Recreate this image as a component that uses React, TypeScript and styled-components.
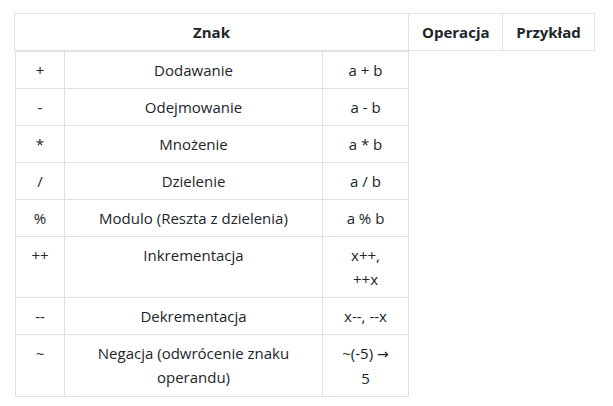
import React from "react";
import styled, { createGlobalStyle } from "styled-components";

const GlobalStyle = createGlobalStyle`
  html, body {
    margin: 0;
    padding: 0;
    background: #fff;
  }
  body {
    font-family: "Open Sans", "Noto Sans", "Liberation Sans", sans-serif;
    font-size: 15px;
    color: #212529;
  }
`;

const Arrow = styled.span`
  font-family: "DejaVu Sans", "Liberation Sans", sans-serif;
  font-size: 14px;
`;

const rows: { sign: string; name: string; example: React.ReactNode }[] = [
  { sign: "+", name: "Dodawanie", example: "a + b" },
  { sign: "-", name: "Odejmowanie", example: "a - b" },
  { sign: "*", name: "Mnożenie", example: "a * b" },
  { sign: "/", name: "Dzielenie", example: "a / b" },
  { sign: "%", name: "Modulo (Reszta z dzielenia)", example: "a % b" },
  { sign: "++", name: "Inkrementacja", example: "x++,\n++x" },
  { sign: "--", name: "Dekrementacja", example: "x--, --x" },
  {
    sign: "~",
    name: "Negacja (odwrócenie znaku operandu)",
    example: (
      <>
        ~(-5) <Arrow>→</Arrow>
        {"\n"}5
      </>
    ),
  },
];

export default function App() {
  return (
    <>
      <GlobalStyle />
      <Page>
        <HeadTable>
          <colgroup>
            <Col $w={395} />
            <Col $w={94} />
            <Col $w={92} />
          </colgroup>
          <thead>
            <tr>
              <HeadCell $first>Znak</HeadCell>
              <HeadCell>Operacja</HeadCell>
              <HeadCell>Przykład</HeadCell>
            </tr>
          </thead>
        </HeadTable>
        <BodyTable>
          <colgroup>
            <Col $w={50} />
            <Col $w={258} />
            <Col $w={86} />
          </colgroup>
          <tbody>
            {rows.map((r, i) => (
              <Row key={r.sign} $top={i === 0}>
                <Cell $first>{r.sign}</Cell>
                <Cell>{r.name}</Cell>
                <Cell>{r.example}</Cell>
              </Row>
            ))}
          </tbody>
        </BodyTable>
      </Page>
    </>
  );
}

const Page = styled.div`
  display: flex;
  flex-direction: column;
  align-items: flex-start;
  padding: 13px 0 0 14px;
`;

const Col = styled.col<{ $w: number }>`
  width: ${({ $w }) => $w}px;
`;

const HeadTable = styled.table`
  border-collapse: separate;
  border-spacing: 0;
  table-layout: fixed;
  width: 581px;
`;

const HeadCell = styled.th<{ $first?: boolean }>`
  box-sizing: border-box;
  height: 38px;
  padding: 6px 13px;
  line-height: 24px;
  font-weight: 700;
  text-align: center;
  border-top: 1px solid #dee2e6;
  border-bottom: 1px solid #dee2e6;
  border-right: 1px solid #dee2e6;
  border-left: ${({ $first }) => ($first ? "1px solid #dee2e6" : "none")};
`;

const BodyTable = styled.table`
  margin-left: 1px;
  border-collapse: separate;
  border-spacing: 0;
  table-layout: fixed;
  width: 394px;
`;

const Row = styled.tr<{ $top?: boolean }>`
  td {
    border-top: ${({ $top }) => ($top ? "1px solid #dee2e6" : "none")};
  }
`;

const Cell = styled.td<{ $first?: boolean }>`
  box-sizing: border-box;
  padding: 6px 13px;
  line-height: 24px;
  text-align: center;
  vertical-align: top;
  white-space: pre-line;
  border-bottom: 1px solid #dee2e6;
  border-right: 1px solid #dee2e6;
  border-left: ${({ $first }) => ($first ? "1px solid #dee2e6" : "none")};
`;
